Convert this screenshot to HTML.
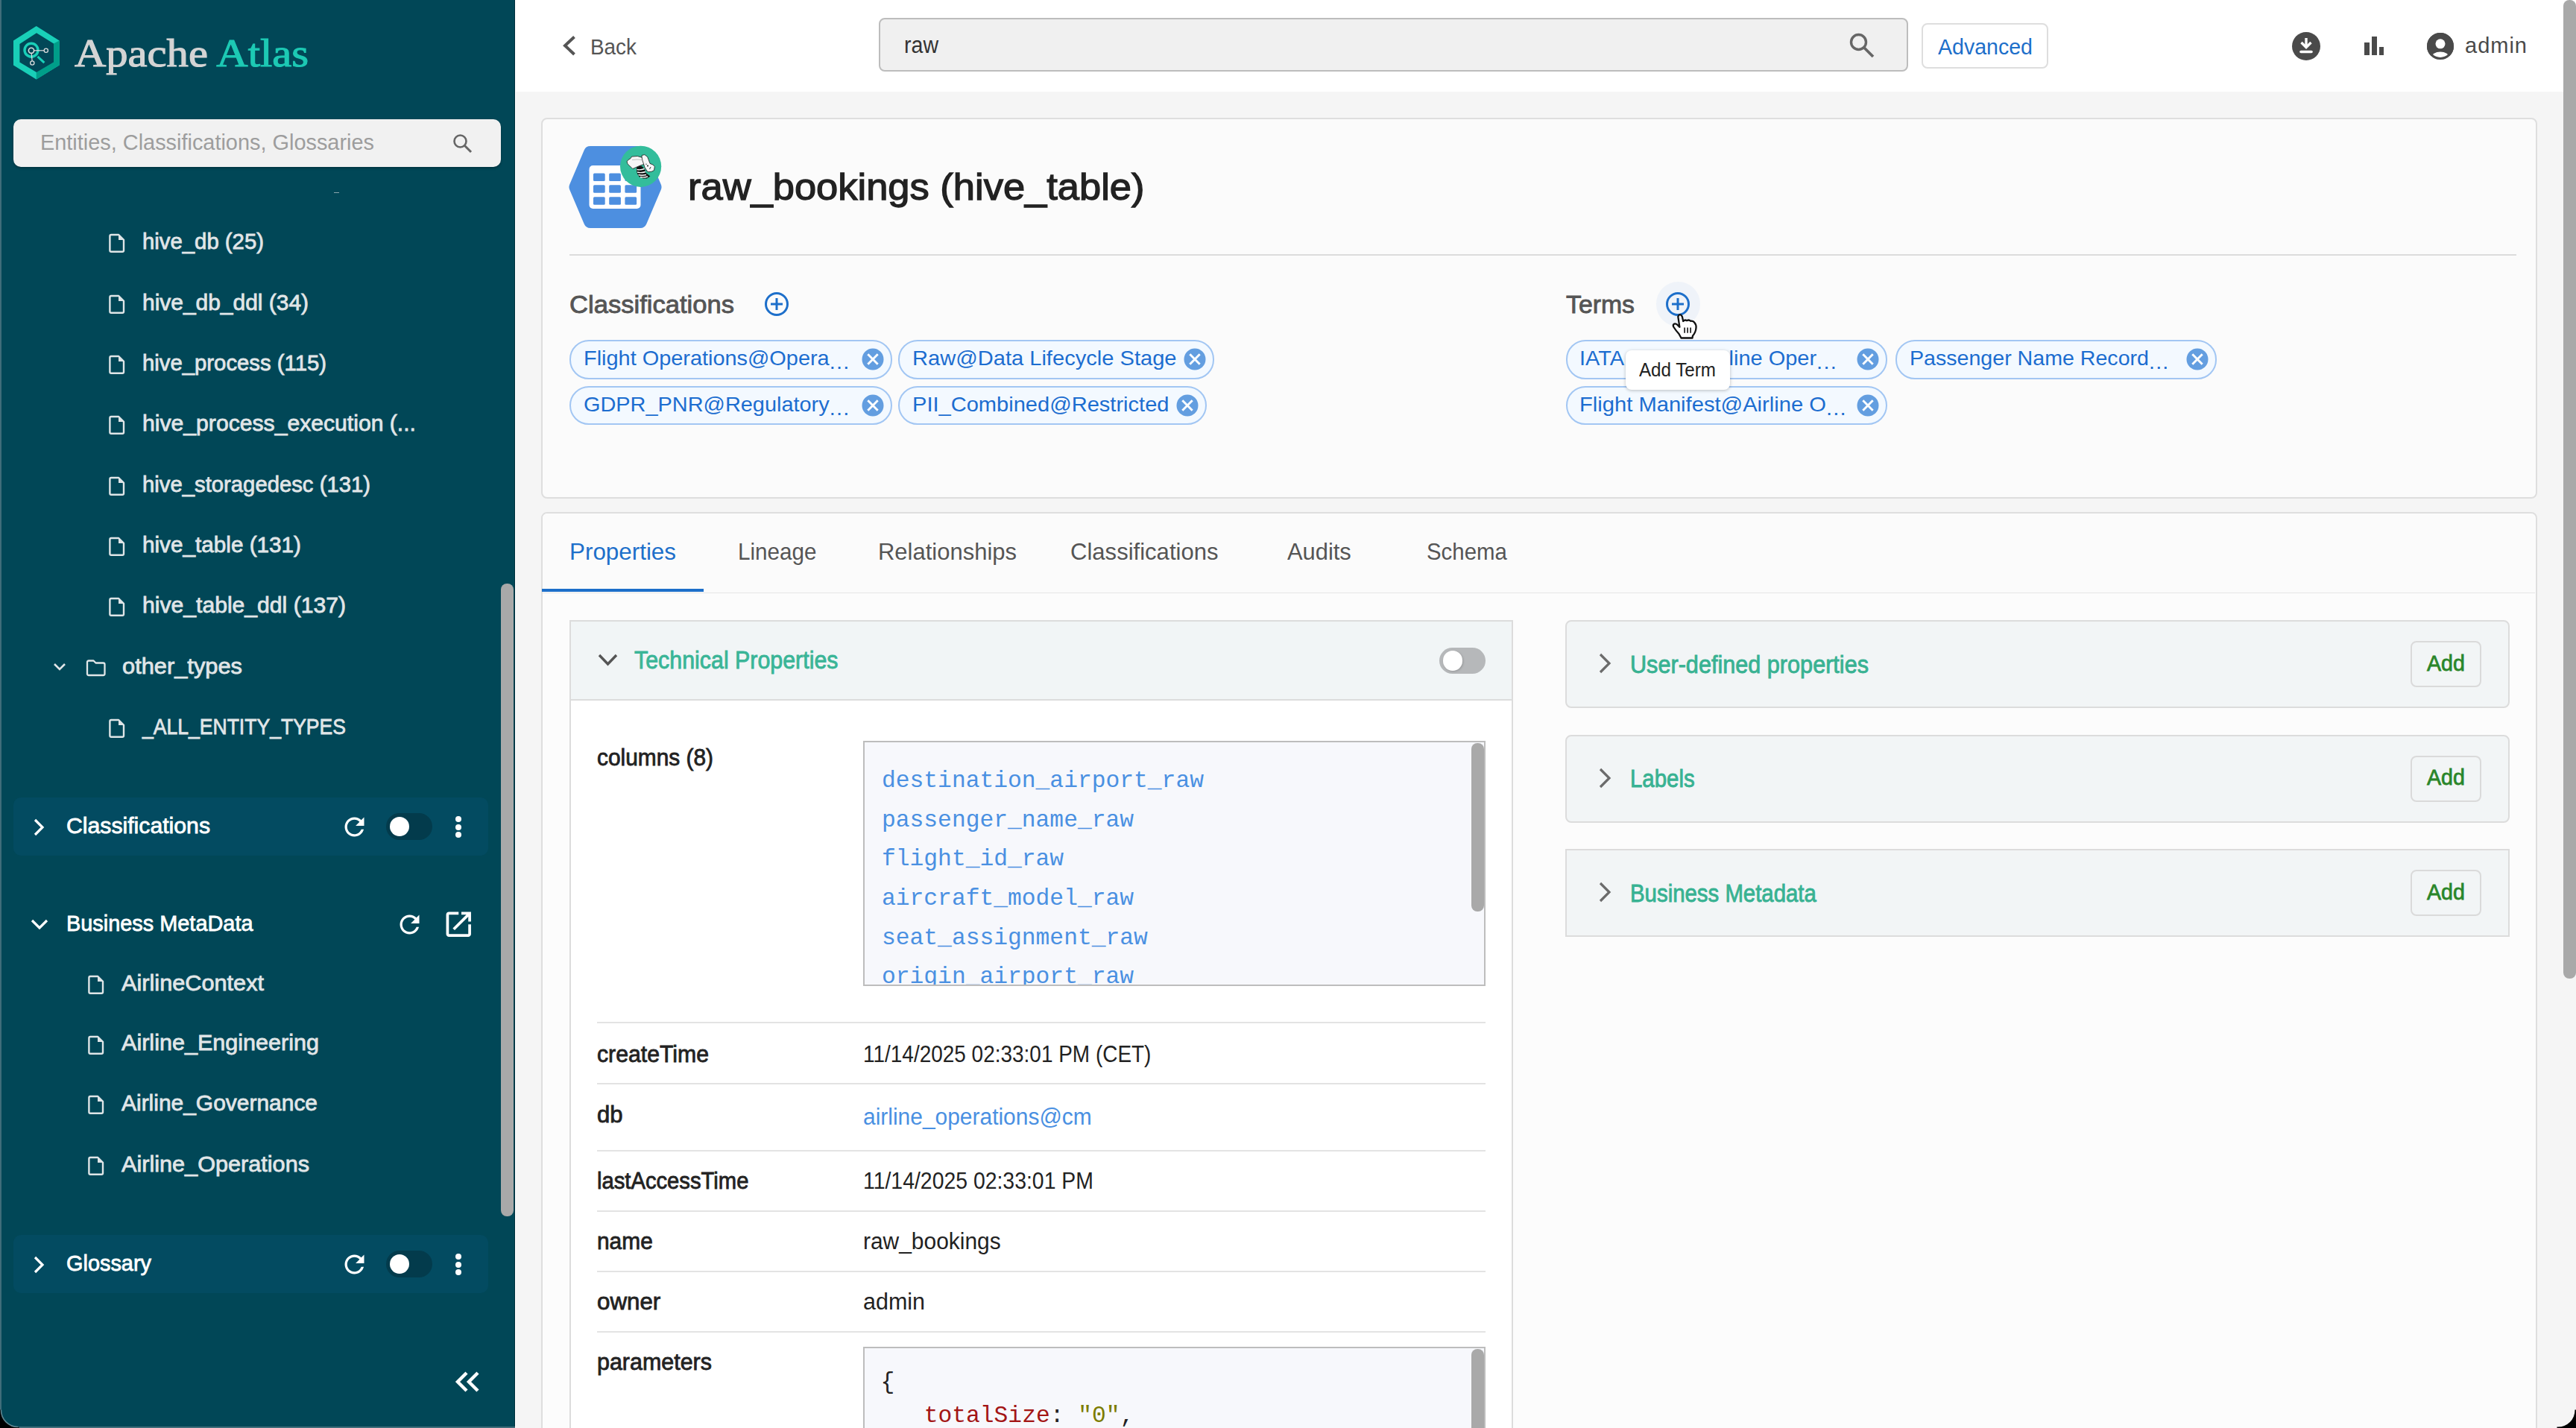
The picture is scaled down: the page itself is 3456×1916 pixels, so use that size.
<!DOCTYPE html>
<html><head><meta charset="utf-8"><style>
html,body{margin:0;padding:0;}
body{width:3456px;height:1916px;overflow:hidden;position:relative;background:#f4f4f4;font-family:"Liberation Sans",sans-serif;}
.b{position:absolute;}
.t{position:absolute;white-space:nowrap;line-height:normal;transform-origin:0 0;}
svg.b{overflow:visible;}
</style></head><body>
<div class="b" style="left:0.0px;top:0.0px;width:691.0px;height:1916.0px;background:#014757;"></div>
<div class="b" style="left:0.0px;top:0.0px;width:2.0px;height:1916.0px;background:#3f6d7a;"></div>
<div class="b" style="left:690.0px;top:0.0px;width:1.0px;height:1916.0px;background:#00313d;"></div>
<div class="b" style="left:691.0px;top:0.0px;width:1.0px;height:1916.0px;background:#ffffff;"></div>
<div class="b" style="left:0.0px;top:1914.0px;width:691.0px;height:2.0px;background:#3f6d7a;"></div>
<svg class="b" style="left:10.0px;top:30.0px" width="80" height="85" viewBox="0 0 80 85">
<polygon points="38.7,5 69.6,24.4 69.6,57.4 38.7,76.5 8,57.4 8,24.4" fill="#19cfb8"/>
<polygon points="69.6,24.4 69.6,57.4 38.7,76.5 38.7,67 62,53.6 62,28.6" fill="#009e89"/>
<polygon points="39,14.3 62,28.6 62,53.6 39,67 16.4,53.6 16.4,29" fill="#014757"/>
<circle cx="32" cy="37.2" r="9" fill="none" stroke="#19cfb8" stroke-width="3.4"/>
<line x1="40.5" y1="45.8" x2="49.4" y2="54.2" stroke="#19cfb8" stroke-width="3"/>
<line x1="32" y1="37.8" x2="51.8" y2="37.8" stroke="#ddd" stroke-width="1.2"/>
<line x1="32" y1="37.8" x2="33.3" y2="54.5" stroke="#ddd" stroke-width="1.2"/>
<circle cx="32" cy="37.8" r="3.6" fill="#014757" stroke="#ddd" stroke-width="1.6"/>
<circle cx="51.8" cy="37.8" r="2.6" fill="#014757" stroke="#ddd" stroke-width="1.3"/>
<circle cx="33.3" cy="54.5" r="2.6" fill="#014757" stroke="#ddd" stroke-width="1.3"/>
</svg>
<div class="t" id="t1" style="left:100.0px;top:42.0px;font-size:52.0px;color:#d4d4d4;font-weight:400;font-family:'Liberation Serif', serif;transform:scaleX(1.1266);-webkit-text-stroke:1.1px #d4d4d4;">Apache <span style="color:#1dc9b4;-webkit-text-stroke:1.1px #1dc9b4">Atlas</span></div>
<div class="b" style="left:18.0px;top:160.0px;width:654.0px;height:64.0px;background:#f1f1f1;border-radius:10px;box-shadow:0 2px 3px rgba(0,0,0,.25);"></div>
<div class="t" id="t2" style="left:54.0px;top:174.3px;font-size:29.5px;color:#9d9d9d;font-weight:400;font-family:'Liberation Sans', sans-serif;transform:scaleX(0.9794);">Entities, Classifications, Glossaries</div>
<svg class="b" style="left:606.0px;top:178.0px" width="30" height="30" viewBox="0 0 30 30"><circle cx="11.5" cy="11.5" r="8" fill="none" stroke="#666" stroke-width="2.6"/><line x1="17.5" y1="17.5" x2="26" y2="26" stroke="#666" stroke-width="3"/></svg>
<div class="b" style="left:448.0px;top:258.0px;width:7.0px;height:1.2px;background:#8aa6ad;"></div>
<svg class="b" style="left:146.0px;top:313.0px" width="22" height="26" viewBox="0 0 22 26"><path d="M3.2,2 H13.2 L20,8.8 V23 Q20,24.8 18.2,24.8 H3.2 Q1.4,24.8 1.4,23 V3.8 Q1.4,2 3.2,2 Z" fill="none" stroke="#dfe5e7" stroke-width="2.4" stroke-linejoin="round"/><polygon points="13,1.8 20.2,9 13,9" fill="#dfe5e7"/></svg>
<div class="t" id="t3" style="left:191.0px;top:306.9px;font-size:30.0px;color:#e1e6e8;font-weight:400;font-family:'Liberation Sans', sans-serif;transform:scaleX(0.9773);-webkit-text-stroke:0.78px #e1e6e8;">hive_db (25)</div>
<svg class="b" style="left:146.0px;top:395.0px" width="22" height="26" viewBox="0 0 22 26"><path d="M3.2,2 H13.2 L20,8.8 V23 Q20,24.8 18.2,24.8 H3.2 Q1.4,24.8 1.4,23 V3.8 Q1.4,2 3.2,2 Z" fill="none" stroke="#dfe5e7" stroke-width="2.4" stroke-linejoin="round"/><polygon points="13,1.8 20.2,9 13,9" fill="#dfe5e7"/></svg>
<div class="t" id="t4" style="left:191.0px;top:388.9px;font-size:30.0px;color:#e1e6e8;font-weight:400;font-family:'Liberation Sans', sans-serif;transform:scaleX(0.9978);-webkit-text-stroke:0.78px #e1e6e8;">hive_db_ddl (34)</div>
<svg class="b" style="left:146.0px;top:476.0px" width="22" height="26" viewBox="0 0 22 26"><path d="M3.2,2 H13.2 L20,8.8 V23 Q20,24.8 18.2,24.8 H3.2 Q1.4,24.8 1.4,23 V3.8 Q1.4,2 3.2,2 Z" fill="none" stroke="#dfe5e7" stroke-width="2.4" stroke-linejoin="round"/><polygon points="13,1.8 20.2,9 13,9" fill="#dfe5e7"/></svg>
<div class="t" id="t5" style="left:191.0px;top:469.9px;font-size:30.0px;color:#e1e6e8;font-weight:400;font-family:'Liberation Sans', sans-serif;transform:scaleX(0.9766);-webkit-text-stroke:0.78px #e1e6e8;">hive_process (115)</div>
<svg class="b" style="left:146.0px;top:557.0px" width="22" height="26" viewBox="0 0 22 26"><path d="M3.2,2 H13.2 L20,8.8 V23 Q20,24.8 18.2,24.8 H3.2 Q1.4,24.8 1.4,23 V3.8 Q1.4,2 3.2,2 Z" fill="none" stroke="#dfe5e7" stroke-width="2.4" stroke-linejoin="round"/><polygon points="13,1.8 20.2,9 13,9" fill="#dfe5e7"/></svg>
<div class="t" id="t6" style="left:191.0px;top:550.9px;font-size:30.0px;color:#e1e6e8;font-weight:400;font-family:'Liberation Sans', sans-serif;transform:scaleX(1.0049);-webkit-text-stroke:0.78px #e1e6e8;">hive_process_execution (...</div>
<svg class="b" style="left:146.0px;top:639.0px" width="22" height="26" viewBox="0 0 22 26"><path d="M3.2,2 H13.2 L20,8.8 V23 Q20,24.8 18.2,24.8 H3.2 Q1.4,24.8 1.4,23 V3.8 Q1.4,2 3.2,2 Z" fill="none" stroke="#dfe5e7" stroke-width="2.4" stroke-linejoin="round"/><polygon points="13,1.8 20.2,9 13,9" fill="#dfe5e7"/></svg>
<div class="t" id="t7" style="left:191.0px;top:632.9px;font-size:30.0px;color:#e1e6e8;font-weight:400;font-family:'Liberation Sans', sans-serif;transform:scaleX(0.9760);-webkit-text-stroke:0.78px #e1e6e8;">hive_storagedesc (131)</div>
<svg class="b" style="left:146.0px;top:720.0px" width="22" height="26" viewBox="0 0 22 26"><path d="M3.2,2 H13.2 L20,8.8 V23 Q20,24.8 18.2,24.8 H3.2 Q1.4,24.8 1.4,23 V3.8 Q1.4,2 3.2,2 Z" fill="none" stroke="#dfe5e7" stroke-width="2.4" stroke-linejoin="round"/><polygon points="13,1.8 20.2,9 13,9" fill="#dfe5e7"/></svg>
<div class="t" id="t8" style="left:191.0px;top:713.9px;font-size:30.0px;color:#e1e6e8;font-weight:400;font-family:'Liberation Sans', sans-serif;transform:scaleX(0.9900);-webkit-text-stroke:0.78px #e1e6e8;">hive_table (131)</div>
<svg class="b" style="left:146.0px;top:801.0px" width="22" height="26" viewBox="0 0 22 26"><path d="M3.2,2 H13.2 L20,8.8 V23 Q20,24.8 18.2,24.8 H3.2 Q1.4,24.8 1.4,23 V3.8 Q1.4,2 3.2,2 Z" fill="none" stroke="#dfe5e7" stroke-width="2.4" stroke-linejoin="round"/><polygon points="13,1.8 20.2,9 13,9" fill="#dfe5e7"/></svg>
<div class="t" id="t9" style="left:191.0px;top:794.9px;font-size:30.0px;color:#e1e6e8;font-weight:400;font-family:'Liberation Sans', sans-serif;transform:scaleX(1.0041);-webkit-text-stroke:0.78px #e1e6e8;">hive_table_ddl (137)</div>
<svg class="b" style="left:70.0px;top:887.0px" width="20" height="16" viewBox="0 0 20 16"><polyline points="3,4 10,11 17,4" fill="none" stroke="#e1e6e8" stroke-width="2.6"/></svg>
<svg class="b" style="left:115.0px;top:884.0px" width="28" height="24" viewBox="0 0 28 24"><path d="M4 2.5 H10.5 L13.5 5.5 H23.5 Q25.5 5.5 25.5 7.5 V20 Q25.5 22 23.5 22 H4 Q2 22 2 20 V4.5 Q2 2.5 4 2.5 Z" fill="none" stroke="#e1e6e8" stroke-width="2.3" stroke-linejoin="round"/></svg>
<div class="t" id="t10" style="left:163.5px;top:876.9px;font-size:30.0px;color:#e1e6e8;font-weight:400;font-family:'Liberation Sans', sans-serif;transform:scaleX(1.0269);-webkit-text-stroke:0.78px #e1e6e8;">other_types</div>
<svg class="b" style="left:146.0px;top:964.0px" width="22" height="26" viewBox="0 0 22 26"><path d="M3.2,2 H13.2 L20,8.8 V23 Q20,24.8 18.2,24.8 H3.2 Q1.4,24.8 1.4,23 V3.8 Q1.4,2 3.2,2 Z" fill="none" stroke="#dfe5e7" stroke-width="2.4" stroke-linejoin="round"/><polygon points="13,1.8 20.2,9 13,9" fill="#dfe5e7"/></svg>
<div class="t" id="t11" style="left:191.0px;top:957.9px;font-size:30.0px;color:#e1e6e8;font-weight:400;font-family:'Liberation Sans', sans-serif;transform:scaleX(0.8850);-webkit-text-stroke:0.78px #e1e6e8;">_ALL_ENTITY_TYPES</div>
<div class="b" style="left:672.0px;top:783.0px;width:17.0px;height:849.0px;background:#a9a9a9;border-radius:8px;"></div>
<div class="b" style="left:18.0px;top:1070.0px;width:637.0px;height:78.0px;background:#034b61;border-radius:10px;"></div>
<svg class="b" style="left:40.0px;top:1097.0px" width="26" height="26" viewBox="0 0 26 26"><polyline points="7,3 17,13 7,23" fill="none" stroke="#fff" stroke-width="3.2"/></svg>
<div class="t" id="t12" style="left:89.0px;top:1090.8px;font-size:30.0px;color:#ffffff;font-weight:400;font-family:'Liberation Sans', sans-serif;transform:scaleX(1.0066);-webkit-text-stroke:0.78px #ffffff;">Classifications</div>
<svg class="b" style="left:455.90px;top:1089.70px" width="39.00" height="39.00" viewBox="0 0 24 24"><path d="M17.65 6.35C16.2 4.9 14.21 4 12 4c-4.42 0-7.99 3.58-7.99 8s3.57 8 7.99 8c3.73 0 6.84-2.55 7.73-6h-2.08c-.82 2.33-3.04 4-5.65 4-3.31 0-6-2.69-6-6s2.69-6 6-6c1.66 0 3.14.69 4.22 1.78L13 11h7V4l-2.35 2.35z" fill="#fff"/></svg>
<div class="b" style="left:518.0px;top:1091.0px;width:62.0px;height:36.0px;background:#033b4c;border-radius:18px;"></div>
<div class="b" style="left:522.5px;top:1096.0px;width:26.0px;height:26.0px;background:#fff;border-radius:13px;"></div>
<div class="b" style="left:611.0px;top:1095.0px;width:8.0px;height:8.0px;background:#fff;border-radius:4px;"></div>
<div class="b" style="left:611.0px;top:1105.5px;width:8.0px;height:8.0px;background:#fff;border-radius:4px;"></div>
<div class="b" style="left:611.0px;top:1116.0px;width:8.0px;height:8.0px;background:#fff;border-radius:4px;"></div>
<svg class="b" style="left:40.0px;top:1230.0px" width="26" height="20" viewBox="0 0 26 20"><polyline points="3,5 13,15 23,5" fill="none" stroke="#fff" stroke-width="3.2"/></svg>
<div class="t" id="t13" style="left:89.0px;top:1221.8px;font-size:30.0px;color:#ffffff;font-weight:400;font-family:'Liberation Sans', sans-serif;transform:scaleX(0.9629);-webkit-text-stroke:0.78px #ffffff;">Business MetaData</div>
<svg class="b" style="left:529.70px;top:1220.70px" width="39.00" height="39.00" viewBox="0 0 24 24"><path d="M17.65 6.35C16.2 4.9 14.21 4 12 4c-4.42 0-7.99 3.58-7.99 8s3.57 8 7.99 8c3.73 0 6.84-2.55 7.73-6h-2.08c-.82 2.33-3.04 4-5.65 4-3.31 0-6-2.69-6-6s2.69-6 6-6c1.66 0 3.14.69 4.22 1.78L13 11h7V4l-2.35 2.35z" fill="#fff"/></svg>
<svg class="b" style="left:592.63px;top:1217.53px" width="44.53" height="44.53" viewBox="0 0 24 24"><path d="M19 19H5V5h7V3H5c-1.11 0-2 .9-2 2v14c0 1.1.89 2 2 2h14c1.1 0 2-.9 2-2v-7h-2v7zM14 3v2h3.59l-9.83 9.83 1.41 1.41L19 6.41V10h2V3h-7z" fill="#fff"/></svg>
<svg class="b" style="left:118.0px;top:1308.0px" width="22" height="26" viewBox="0 0 22 26"><path d="M3.2,2 H13.2 L20,8.8 V23 Q20,24.8 18.2,24.8 H3.2 Q1.4,24.8 1.4,23 V3.8 Q1.4,2 3.2,2 Z" fill="none" stroke="#dfe5e7" stroke-width="2.4" stroke-linejoin="round"/><polygon points="13,1.8 20.2,9 13,9" fill="#dfe5e7"/></svg>
<div class="t" id="t14" style="left:163.0px;top:1301.8px;font-size:30.0px;color:#e1e6e8;font-weight:400;font-family:'Liberation Sans', sans-serif;transform:scaleX(1.0227);-webkit-text-stroke:0.78px #e1e6e8;">AirlineContext</div>
<svg class="b" style="left:118.0px;top:1388.5px" width="22" height="26" viewBox="0 0 22 26"><path d="M3.2,2 H13.2 L20,8.8 V23 Q20,24.8 18.2,24.8 H3.2 Q1.4,24.8 1.4,23 V3.8 Q1.4,2 3.2,2 Z" fill="none" stroke="#dfe5e7" stroke-width="2.4" stroke-linejoin="round"/><polygon points="13,1.8 20.2,9 13,9" fill="#dfe5e7"/></svg>
<div class="t" id="t15" style="left:163.0px;top:1382.3px;font-size:30.0px;color:#e1e6e8;font-weight:400;font-family:'Liberation Sans', sans-serif;transform:scaleX(1.0186);-webkit-text-stroke:0.78px #e1e6e8;">Airline_Engineering</div>
<svg class="b" style="left:118.0px;top:1469.0px" width="22" height="26" viewBox="0 0 22 26"><path d="M3.2,2 H13.2 L20,8.8 V23 Q20,24.8 18.2,24.8 H3.2 Q1.4,24.8 1.4,23 V3.8 Q1.4,2 3.2,2 Z" fill="none" stroke="#dfe5e7" stroke-width="2.4" stroke-linejoin="round"/><polygon points="13,1.8 20.2,9 13,9" fill="#dfe5e7"/></svg>
<div class="t" id="t16" style="left:163.0px;top:1462.8px;font-size:30.0px;color:#e1e6e8;font-weight:400;font-family:'Liberation Sans', sans-serif;transform:scaleX(0.9982);-webkit-text-stroke:0.78px #e1e6e8;">Airline_Governance</div>
<svg class="b" style="left:118.0px;top:1551.0px" width="22" height="26" viewBox="0 0 22 26"><path d="M3.2,2 H13.2 L20,8.8 V23 Q20,24.8 18.2,24.8 H3.2 Q1.4,24.8 1.4,23 V3.8 Q1.4,2 3.2,2 Z" fill="none" stroke="#dfe5e7" stroke-width="2.4" stroke-linejoin="round"/><polygon points="13,1.8 20.2,9 13,9" fill="#dfe5e7"/></svg>
<div class="t" id="t17" style="left:163.0px;top:1544.8px;font-size:30.0px;color:#e1e6e8;font-weight:400;font-family:'Liberation Sans', sans-serif;transform:scaleX(1.0211);-webkit-text-stroke:0.78px #e1e6e8;">Airline_Operations</div>
<div class="b" style="left:18.0px;top:1657.0px;width:637.0px;height:78.0px;background:#034b61;border-radius:10px;"></div>
<svg class="b" style="left:40.0px;top:1684.0px" width="26" height="26" viewBox="0 0 26 26"><polyline points="7,3 17,13 7,23" fill="none" stroke="#fff" stroke-width="3.2"/></svg>
<div class="t" id="t18" style="left:89.0px;top:1677.8px;font-size:30.0px;color:#ffffff;font-weight:400;font-family:'Liberation Sans', sans-serif;transform:scaleX(0.9632);-webkit-text-stroke:0.78px #ffffff;">Glossary</div>
<svg class="b" style="left:455.90px;top:1676.70px" width="39.00" height="39.00" viewBox="0 0 24 24"><path d="M17.65 6.35C16.2 4.9 14.21 4 12 4c-4.42 0-7.99 3.58-7.99 8s3.57 8 7.99 8c3.73 0 6.84-2.55 7.73-6h-2.08c-.82 2.33-3.04 4-5.65 4-3.31 0-6-2.69-6-6s2.69-6 6-6c1.66 0 3.14.69 4.22 1.78L13 11h7V4l-2.35 2.35z" fill="#fff"/></svg>
<div class="b" style="left:518.0px;top:1678.0px;width:62.0px;height:36.0px;background:#033b4c;border-radius:18px;"></div>
<div class="b" style="left:522.5px;top:1683.0px;width:26.0px;height:26.0px;background:#fff;border-radius:13px;"></div>
<div class="b" style="left:611.0px;top:1682.0px;width:8.0px;height:8.0px;background:#fff;border-radius:4px;"></div>
<div class="b" style="left:611.0px;top:1692.5px;width:8.0px;height:8.0px;background:#fff;border-radius:4px;"></div>
<div class="b" style="left:611.0px;top:1703.0px;width:8.0px;height:8.0px;background:#fff;border-radius:4px;"></div>
<svg class="b" style="left:608.0px;top:1838.0px" width="40" height="34" viewBox="0 0 40 34"><polyline points="18,4 6,16 18,28" fill="none" stroke="#fff" stroke-width="4.4"/><polyline points="33,4 21,16 33,28" fill="none" stroke="#fff" stroke-width="4.4"/></svg>
<div class="b" style="left:692.0px;top:0.0px;width:2764.0px;height:1916.0px;background:#f5f5f5;"></div>
<div class="b" style="left:692.0px;top:0.0px;width:2764.0px;height:123.0px;background:#fff;"></div>
<svg class="b" style="left:752.0px;top:46.0px" width="26" height="32" viewBox="0 0 26 32"><polyline points="18.5,3.5 6,15.2 18.5,27" fill="none" stroke="#555" stroke-width="4"/></svg>
<div class="t" id="t19" style="left:792.0px;top:45.5px;font-size:29.5px;color:#555;font-weight:400;font-family:'Liberation Sans', sans-serif;transform:scaleX(0.9452);">Back</div>
<div class="b" style="left:1178.5px;top:24.0px;width:1381.0px;height:72.0px;background:#f0f0f0;border:2px solid #bdbdbd;border-radius:8px;box-sizing:border-box;"></div>
<div class="t" id="t20" style="left:1213.0px;top:42.9px;font-size:31.0px;color:#333;font-weight:400;font-family:'Liberation Sans', sans-serif;transform:scaleX(0.9209);">raw</div>
<svg class="b" style="left:2479.0px;top:41.5px" width="38" height="38" viewBox="0 0 38 38"><circle cx="14.5" cy="14.5" r="10" fill="none" stroke="#666" stroke-width="3.4"/><line x1="22" y1="22" x2="34" y2="34" stroke="#666" stroke-width="3.8"/></svg>
<div class="b" style="left:2578.0px;top:31.0px;width:170.0px;height:61.0px;background:#fff;border:2px solid #dedede;border-radius:8px;box-sizing:border-box;"></div>
<div class="t" id="t21" style="left:2599.5px;top:46.3px;font-size:30.0px;color:#1d6fca;font-weight:400;font-family:'Liberation Sans', sans-serif;transform:scaleX(0.9518);">Advanced</div>
<svg class="b" style="left:3075.0px;top:43.0px" width="38" height="38" viewBox="0 0 38 38"><circle cx="19" cy="19" r="19" fill="#4a4a4a"/><line x1="19" y1="8" x2="19" y2="20" stroke="#fff" stroke-width="3.4"/><polyline points="12.5,14 19,20.5 25.5,14" fill="none" stroke="#fff" stroke-width="3.4"/><line x1="12" y1="26.5" x2="26" y2="26.5" stroke="#fff" stroke-width="3.6" stroke-linecap="round"/></svg>
<div class="b" style="left:3172.0px;top:56.7px;width:6.5px;height:17.3px;background:#4a4a4a;"></div>
<div class="b" style="left:3182.0px;top:48.6px;width:6.5px;height:25.4px;background:#4a4a4a;"></div>
<div class="b" style="left:3192.0px;top:63.0px;width:6.0px;height:11.0px;background:#4a4a4a;"></div>
<svg class="b" style="left:3256.0px;top:44.0px" width="36" height="36" viewBox="0 0 36 36"><defs><clipPath id="uc"><circle cx="18" cy="18" r="18"/></clipPath></defs><circle cx="18" cy="18" r="18" fill="#4a4a4a"/><circle cx="18" cy="14.8" r="6.5" fill="#fff"/><ellipse cx="18" cy="33" rx="12" ry="7.5" fill="#fff" clip-path="url(#uc)"/><circle cx="18" cy="18" r="16.5" fill="none" stroke="#4a4a4a" stroke-width="3"/></svg>
<div class="t" id="t22" style="left:3306.5px;top:44.3px;font-size:29.5px;color:#4a4a4a;font-weight:400;font-family:'Liberation Sans', sans-serif;transform:scaleX(0.9841);letter-spacing:1px;">admin</div>
<div class="b" style="left:726.0px;top:158.0px;width:2678.0px;height:511.0px;background:#fbfbfb;border:2px solid #dedede;border-radius:8px;box-sizing:border-box;"></div>
<svg class="b" style="left:755.0px;top:190.0px" width="140" height="125" viewBox="0 0 140 125">
<polygon points="37,15 104,15 123.5,61 104,107 37,107 17.5,61" fill="#4d8fe0" stroke="#4d8fe0" stroke-width="18" stroke-linejoin="round"/>
<rect x="35.5" y="32" width="69" height="58" rx="5" fill="#fff"/>
<g fill="#4d8fe0">
<rect x="41" y="42.5" width="15.7" height="10.5" rx="1.5"/><rect x="62.2" y="42.5" width="15.7" height="10.5" rx="1.5"/><rect x="83.4" y="42.5" width="15.7" height="10.5" rx="1.5"/>
<rect x="41" y="58.2" width="15.7" height="10.5" rx="1.5"/><rect x="62.2" y="58.2" width="15.7" height="10.5" rx="1.5"/><rect x="83.4" y="58.2" width="15.7" height="10.5" rx="1.5"/>
<rect x="41" y="74.3" width="15.7" height="10.5" rx="1.5"/><rect x="62.2" y="74.3" width="15.7" height="10.5" rx="1.5"/><rect x="83.4" y="74.3" width="15.7" height="10.5" rx="1.5"/>
</g>
<circle cx="104.6" cy="33.3" r="27.6" fill="#33bd9b"/>
<path d="M99,34.4 L103.6,31.9 L106.9,33.6 L110.3,37.8 L111.6,42 L117.4,46.6 L112.8,49.5 L107.8,49.5 L102.3,47 L99.8,42.8 L99,38.6 Z" fill="#111"/>
<path d="M99.5,37.5 Q104,38.5 109.5,36.5 M100,41 Q105,42.5 111,40.5 M101.5,44.5 Q106,46 112,44.5 M104,47.5 Q108,48.5 114,47" fill="none" stroke="#fff" stroke-width="1.4"/>
<path d="M86.1,26.8 L87.6,24.7 L91,22.6 L92.6,20.1 L100.2,19.5 L106.9,21.4 L110.7,25.2 L112,26.8 L109.5,30.2 L104.4,31.9 L98.5,34.4 L93.9,36.5 L91.8,34.4 L88.9,31.9 L86.8,29.4 Z" fill="#f6f6f6" stroke="#1a1a1a" stroke-width=".8" stroke-linejoin="round"/>
<path d="M106.1,18.4 L109.9,17.6 L113.7,20.5 L115.3,24.7 L117,29.4 L121.2,31.1 L123.3,33.6 L122.5,38.6 L119.1,40.3 L114.1,40.7 L112,37.8 L109.9,34.4 L108.6,30.2 L106.9,25.2 L106.1,21 Z" fill="#f6f6f6" stroke="#1a1a1a" stroke-width=".8" stroke-linejoin="round"/>
<path d="M93,24.5 Q100,23.5 107,24.5" fill="none" stroke="#999" stroke-width=".6"/>
<circle cx="114" cy="32.5" r="1" fill="#222"/><circle cx="112" cy="30.3" r=".7" fill="#333"/><path d="M118,34 L116.5,37" stroke="#222" stroke-width=".9"/>
</svg>
<div class="t" id="t23" style="left:922.5px;top:221.6px;font-size:50.0px;color:#222;font-weight:400;font-family:'Liberation Sans', sans-serif;transform:scaleX(1.0494);-webkit-text-stroke:1.30px #222;">raw_bookings (hive_table)</div>
<div class="b" style="left:763.5px;top:341.0px;width:2612.0px;height:2.0px;background:#dcdcdc;"></div>
<div class="t" id="t24" style="left:764.0px;top:389.2px;font-size:34.0px;color:#555;font-weight:400;font-family:'Liberation Sans', sans-serif;transform:scaleX(1.0170);-webkit-text-stroke:0.88px #555;">Classifications</div>
<svg class="b" style="left:1024.0px;top:390.0px" width="36" height="36" viewBox="0 0 36 36"><circle cx="18" cy="18" r="14.5" fill="none" stroke="#1d6fca" stroke-width="3"/><line x1="18" y1="10" x2="18" y2="26" stroke="#1d6fca" stroke-width="3"/><line x1="10" y1="18" x2="26" y2="18" stroke="#1d6fca" stroke-width="3"/></svg>
<div class="t" id="t25" style="left:2101.0px;top:389.2px;font-size:34.0px;color:#555;font-weight:400;font-family:'Liberation Sans', sans-serif;transform:scaleX(0.9939);-webkit-text-stroke:0.88px #555;">Terms</div>
<div class="b" style="left:2221.5px;top:378.0px;width:59.5px;height:59.5px;background:#eff3f9;border-radius:30px;"></div>
<svg class="b" style="left:2233.0px;top:390.0px" width="36" height="36" viewBox="0 0 36 36"><circle cx="18" cy="18" r="14.5" fill="none" stroke="#1d6fca" stroke-width="3"/><line x1="18" y1="10" x2="18" y2="26" stroke="#1d6fca" stroke-width="3"/><line x1="10" y1="18" x2="26" y2="18" stroke="#1d6fca" stroke-width="3"/></svg>
<div class="b" style="left:764.0px;top:456.0px;width:432.5px;height:53.0px;background:#f3f9ff;border:2px solid #a2c6f3;border-radius:26px;box-sizing:border-box;"></div>
<div class="t" id="t26" style="left:782.5px;top:465.2px;font-size:28.0px;color:#1c6dd0;font-weight:400;font-family:'Liberation Sans', sans-serif;transform:scaleX(1.0320);">Flight Operations@Opera<span style="letter-spacing:1.2px;position:relative;top:5px">...</span></div>
<svg class="b" style="left:1155.5px;top:467.0px" width="30" height="30" viewBox="0 0 30 30"><circle cx="15" cy="15" r="14.5" fill="#639ee0"/><path d="M8.3 8.3 L21.7 21.7 M21.7 8.3 L8.3 21.7" stroke="#fff" stroke-width="2.9"/></svg>
<div class="b" style="left:1205.0px;top:456.0px;width:424.0px;height:53.0px;background:#f3f9ff;border:2px solid #a2c6f3;border-radius:26px;box-sizing:border-box;"></div>
<div class="t" id="t27" style="left:1223.5px;top:465.2px;font-size:28.0px;color:#1c6dd0;font-weight:400;font-family:'Liberation Sans', sans-serif;transform:scaleX(1.0388);">Raw@Data Lifecycle Stage</div>
<svg class="b" style="left:1588.0px;top:467.0px" width="30" height="30" viewBox="0 0 30 30"><circle cx="15" cy="15" r="14.5" fill="#639ee0"/><path d="M8.3 8.3 L21.7 21.7 M21.7 8.3 L8.3 21.7" stroke="#fff" stroke-width="2.9"/></svg>
<div class="b" style="left:764.0px;top:518.0px;width:432.5px;height:52.0px;background:#f3f9ff;border:2px solid #a2c6f3;border-radius:26px;box-sizing:border-box;"></div>
<div class="t" id="t28" style="left:782.5px;top:527.2px;font-size:28.0px;color:#1c6dd0;font-weight:400;font-family:'Liberation Sans', sans-serif;transform:scaleX(1.0321);">GDPR_PNR@Regulatory<span style="letter-spacing:1.2px;position:relative;top:5px">...</span></div>
<svg class="b" style="left:1155.5px;top:529.0px" width="30" height="30" viewBox="0 0 30 30"><circle cx="15" cy="15" r="14.5" fill="#639ee0"/><path d="M8.3 8.3 L21.7 21.7 M21.7 8.3 L8.3 21.7" stroke="#fff" stroke-width="2.9"/></svg>
<div class="b" style="left:1205.0px;top:518.0px;width:414.0px;height:52.0px;background:#f3f9ff;border:2px solid #a2c6f3;border-radius:26px;box-sizing:border-box;"></div>
<div class="t" id="t29" style="left:1223.5px;top:527.2px;font-size:28.0px;color:#1c6dd0;font-weight:400;font-family:'Liberation Sans', sans-serif;transform:scaleX(1.0379);">PII_Combined@Restricted</div>
<svg class="b" style="left:1578.0px;top:529.0px" width="30" height="30" viewBox="0 0 30 30"><circle cx="15" cy="15" r="14.5" fill="#639ee0"/><path d="M8.3 8.3 L21.7 21.7 M21.7 8.3 L8.3 21.7" stroke="#fff" stroke-width="2.9"/></svg>
<div class="b" style="left:2100.5px;top:456.0px;width:431.5px;height:53.0px;background:#f3f9ff;border:2px solid #a2c6f3;border-radius:26px;box-sizing:border-box;"></div>
<div class="t" id="t30" style="left:2119.0px;top:465.2px;font-size:28.0px;color:#1c6dd0;font-weight:400;font-family:'Liberation Sans', sans-serif;transform:scaleX(1.0345);">IATA Code@Airline Oper<span style="letter-spacing:1.2px;position:relative;top:5px">...</span></div>
<svg class="b" style="left:2491.0px;top:467.0px" width="30" height="30" viewBox="0 0 30 30"><circle cx="15" cy="15" r="14.5" fill="#639ee0"/><path d="M8.3 8.3 L21.7 21.7 M21.7 8.3 L8.3 21.7" stroke="#fff" stroke-width="2.9"/></svg>
<div class="b" style="left:2543.0px;top:456.0px;width:431.0px;height:53.0px;background:#f3f9ff;border:2px solid #a2c6f3;border-radius:26px;box-sizing:border-box;"></div>
<div class="t" id="t31" style="left:2561.5px;top:465.2px;font-size:28.0px;color:#1c6dd0;font-weight:400;font-family:'Liberation Sans', sans-serif;transform:scaleX(1.0210);">Passenger Name Record<span style="letter-spacing:1.2px;position:relative;top:5px">...</span></div>
<svg class="b" style="left:2933.0px;top:467.0px" width="30" height="30" viewBox="0 0 30 30"><circle cx="15" cy="15" r="14.5" fill="#639ee0"/><path d="M8.3 8.3 L21.7 21.7 M21.7 8.3 L8.3 21.7" stroke="#fff" stroke-width="2.9"/></svg>
<div class="b" style="left:2100.5px;top:518.0px;width:431.5px;height:52.0px;background:#f3f9ff;border:2px solid #a2c6f3;border-radius:26px;box-sizing:border-box;"></div>
<div class="t" id="t32" style="left:2119.0px;top:527.2px;font-size:28.0px;color:#1c6dd0;font-weight:400;font-family:'Liberation Sans', sans-serif;transform:scaleX(1.0411);">Flight Manifest@Airline O<span style="letter-spacing:1.2px;position:relative;top:5px">...</span></div>
<svg class="b" style="left:2491.0px;top:529.0px" width="30" height="30" viewBox="0 0 30 30"><circle cx="15" cy="15" r="14.5" fill="#639ee0"/><path d="M8.3 8.3 L21.7 21.7 M21.7 8.3 L8.3 21.7" stroke="#fff" stroke-width="2.9"/></svg>
<div class="b" style="left:2180.5px;top:470.0px;width:140.0px;height:52.5px;background:#fff;border-radius:8px;box-shadow:0 1px 4px rgba(0,0,0,.25);"></div>
<div class="t" id="t33" style="left:2199.0px;top:481.0px;font-size:26.5px;color:#222;font-weight:400;font-family:'Liberation Sans', sans-serif;transform:scaleX(0.9120);">Add Term</div>
<svg class="b" style="left:2240.0px;top:418.0px" width="42" height="42" viewBox="0 0 42 42"><path d="M11.3,6.8 Q13.8,1.5 16.9,6.9 L18.2,13 Q20.5,10.5 23,12.2 Q26,10.5 28.2,12.8 Q31.5,12 33.5,15 Q36,18 35.5,22 Q35,28 31,32.5 L30.5,35.5 H15.5 L12.5,30 Q8,25 5.2,20.5 Q4,17.8 6.2,16.6 Q8.3,15.8 10.3,17.8 L13.4,20.8 Z" fill="#fff" stroke="#111" stroke-width="2.3" stroke-linejoin="round"/><path d="M20.1,21.5 V28.7 M24.1,21.5 V28.7 M28.1,21.5 V28.7" stroke="#111" stroke-width="1.6"/></svg>
<div class="b" style="left:726.0px;top:687.0px;width:2678.0px;height:1300.0px;background:#fcfcfc;border:2px solid #dedede;border-radius:8px;box-sizing:border-box;"></div>
<div class="b" style="left:728.0px;top:689.0px;width:2673.0px;height:105.0px;background:#fbfbfb;border-radius:6px 6px 0 0;"></div>
<div class="b" style="left:728.0px;top:794.5px;width:2673.0px;height:1.5px;background:#e6e6e6;"></div>
<div class="b" style="left:727.0px;top:790.0px;width:217.0px;height:4.3px;background:#1d6fca;"></div>
<div class="t" id="t34" style="left:764.0px;top:722.3px;font-size:32.0px;color:#1d6fca;font-weight:400;font-family:'Liberation Sans', sans-serif;transform:scaleX(0.9805);">Properties</div>
<div class="t" id="t35" style="left:989.6px;top:722.3px;font-size:32.0px;color:#555;font-weight:400;font-family:'Liberation Sans', sans-serif;transform:scaleX(0.9254);">Lineage</div>
<div class="t" id="t36" style="left:1178.0px;top:722.3px;font-size:32.0px;color:#555;font-weight:400;font-family:'Liberation Sans', sans-serif;transform:scaleX(0.9682);">Relationships</div>
<div class="t" id="t37" style="left:1436.0px;top:722.3px;font-size:32.0px;color:#555;font-weight:400;font-family:'Liberation Sans', sans-serif;transform:scaleX(0.9706);">Classifications</div>
<div class="t" id="t38" style="left:1726.8px;top:722.3px;font-size:32.0px;color:#555;font-weight:400;font-family:'Liberation Sans', sans-serif;transform:scaleX(0.9647);">Audits</div>
<div class="t" id="t39" style="left:1913.7px;top:722.3px;font-size:32.0px;color:#555;font-weight:400;font-family:'Liberation Sans', sans-serif;transform:scaleX(0.9183);">Schema</div>
<div class="b" style="left:764.0px;top:832.0px;width:1266.0px;height:1200.0px;background:#fff;border:2px solid #dcdcdc;box-sizing:border-box;"></div>
<div class="b" style="left:766.0px;top:834.0px;width:1262.0px;height:105.0px;background:#f1f5f6;"></div>
<div class="b" style="left:766.0px;top:938.0px;width:1262.0px;height:2.0px;background:#dcdcdc;"></div>
<svg class="b" style="left:800.0px;top:874.0px" width="32" height="24" viewBox="0 0 32 24"><polyline points="4,5 15.5,17 27,5" fill="none" stroke="#555" stroke-width="3.4"/></svg>
<div class="t" id="t40" style="left:850.5px;top:866.6px;font-size:33.0px;color:#3ab597;font-weight:400;font-family:'Liberation Sans', sans-serif;transform:scaleX(0.9204);-webkit-text-stroke:0.86px #3ab597;">Technical Properties</div>
<div class="b" style="left:1931.0px;top:869.0px;width:62.0px;height:35.0px;background:#b6b8ba;border-radius:17.5px;"></div>
<div class="b" style="left:1935.8px;top:873.2px;width:26.4px;height:26.4px;background:#fff;border-radius:13.2px;box-shadow:1px 1px 3px rgba(0,0,0,.18);"></div>
<div class="t" id="t41" style="left:801.0px;top:998.9px;font-size:31.0px;color:#222;font-weight:400;font-family:'Liberation Sans', sans-serif;transform:scaleX(0.9633);-webkit-text-stroke:0.81px #222;">columns (8)</div>
<div class="b" style="left:1158.0px;top:994.0px;width:835.0px;height:329.0px;background:#f7f8fc;border:2px solid #bdbdbd;box-sizing:border-box;overflow:hidden;"></div>
<div class="b" style="left:1160px;top:996px;width:831px;height:325px;overflow:hidden">
<div class="t" id="t42" style="left:23.0px;top:33.9px;font-size:31.3px;color:#4a90e2;font-weight:400;font-family:'Liberation Mono', monospace;">destination_airport_raw</div>
<div class="t" id="t43" style="left:23.0px;top:86.6px;font-size:31.3px;color:#4a90e2;font-weight:400;font-family:'Liberation Mono', monospace;">passenger_name_raw</div>
<div class="t" id="t44" style="left:23.0px;top:139.3px;font-size:31.3px;color:#4a90e2;font-weight:400;font-family:'Liberation Mono', monospace;">flight_id_raw</div>
<div class="t" id="t45" style="left:23.0px;top:192.0px;font-size:31.3px;color:#4a90e2;font-weight:400;font-family:'Liberation Mono', monospace;">aircraft_model_raw</div>
<div class="t" id="t46" style="left:23.0px;top:244.7px;font-size:31.3px;color:#4a90e2;font-weight:400;font-family:'Liberation Mono', monospace;">seat_assignment_raw</div>
<div class="t" id="t47" style="left:23.0px;top:297.4px;font-size:31.3px;color:#4a90e2;font-weight:400;font-family:'Liberation Mono', monospace;">origin_airport_raw</div>
</div>
<div class="b" style="left:1974.0px;top:997.0px;width:17.0px;height:226.0px;background:#a9a9a9;border-radius:8px;"></div>
<div class="b" style="left:801.0px;top:1371.0px;width:1192.0px;height:2.0px;background:#e3e3e3;"></div>
<div class="b" style="left:801.0px;top:1453.0px;width:1192.0px;height:2.0px;background:#e3e3e3;"></div>
<div class="b" style="left:801.0px;top:1543.0px;width:1192.0px;height:2.0px;background:#e3e3e3;"></div>
<div class="b" style="left:801.0px;top:1624.0px;width:1192.0px;height:2.0px;background:#e3e3e3;"></div>
<div class="b" style="left:801.0px;top:1705.0px;width:1192.0px;height:2.0px;background:#e3e3e3;"></div>
<div class="b" style="left:801.0px;top:1786.0px;width:1192.0px;height:2.0px;background:#e3e3e3;"></div>
<div class="t" id="t48" style="left:801.0px;top:1396.9px;font-size:31.0px;color:#222;font-weight:400;font-family:'Liberation Sans', sans-serif;transform:scaleX(0.9750);-webkit-text-stroke:0.81px #222;">createTime</div>
<div class="t" id="t49" style="left:1158.0px;top:1396.9px;font-size:31.0px;color:#222;font-weight:400;font-family:'Liberation Sans', sans-serif;transform:scaleX(0.9018);">11/14/2025 02:33:01 PM (CET)</div>
<div class="t" id="t50" style="left:801.0px;top:1477.6px;font-size:31.0px;color:#222;font-weight:400;font-family:'Liberation Sans', sans-serif;-webkit-text-stroke:0.81px #222;">db</div>
<div class="t" id="t51" style="left:801.0px;top:1566.9px;font-size:31.0px;color:#222;font-weight:400;font-family:'Liberation Sans', sans-serif;transform:scaleX(0.9420);-webkit-text-stroke:0.81px #222;">lastAccessTime</div>
<div class="t" id="t52" style="left:1158.0px;top:1566.9px;font-size:31.0px;color:#222;font-weight:400;font-family:'Liberation Sans', sans-serif;transform:scaleX(0.9160);">11/14/2025 02:33:01 PM</div>
<div class="t" id="t53" style="left:801.0px;top:1647.9px;font-size:31.0px;color:#222;font-weight:400;font-family:'Liberation Sans', sans-serif;transform:scaleX(0.9640);-webkit-text-stroke:0.81px #222;">name</div>
<div class="t" id="t54" style="left:1158.0px;top:1647.9px;font-size:31.0px;color:#222;font-weight:400;font-family:'Liberation Sans', sans-serif;transform:scaleX(0.9655);">raw_bookings</div>
<div class="t" id="t55" style="left:801.0px;top:1729.3px;font-size:31.0px;color:#222;font-weight:400;font-family:'Liberation Sans', sans-serif;transform:scaleX(1.0091);-webkit-text-stroke:0.81px #222;">owner</div>
<div class="t" id="t56" style="left:1158.0px;top:1729.3px;font-size:31.0px;color:#222;font-weight:400;font-family:'Liberation Sans', sans-serif;transform:scaleX(0.9830);">admin</div>
<div class="t" id="t57" style="left:801.0px;top:1809.9px;font-size:31.0px;color:#222;font-weight:400;font-family:'Liberation Sans', sans-serif;transform:scaleX(0.9816);-webkit-text-stroke:0.81px #222;">parameters</div>
<div class="t" id="t58" style="left:1158.0px;top:1481.4px;font-size:31.0px;color:#4a90e2;font-weight:400;font-family:'Liberation Sans', sans-serif;transform:scaleX(0.9660);">airline_operations@cm</div>
<div class="b" style="left:1158.0px;top:1807.0px;width:835.0px;height:200.0px;background:#f7f8fc;border:2px solid #bdbdbd;box-sizing:border-box;"></div>
<div class="t" id="t59" style="left:1181.5px;top:1836.9px;font-size:31.3px;color:#222;font-weight:400;font-family:'Liberation Mono', monospace;">{</div>
<div class="t" id="t60" style="left:1239.7px;top:1881.9px;font-size:31.3px;color:#222;font-weight:400;font-family:'Liberation Mono', monospace;"><span style="color:#a31515">totalSize</span>: <span style="color:#7c7c00">"0"</span>,</div>
<div class="b" style="left:1974.0px;top:1810.0px;width:17.0px;height:200.0px;background:#a9a9a9;border-radius:8px;"></div>
<div class="b" style="left:2100.0px;top:832.0px;width:1267.0px;height:118.0px;background:#f2f5f6;border:2px solid #dcdcdc;border-radius:8px;box-sizing:border-box;"></div>
<svg class="b" style="left:2141.5px;top:875.0px" width="26" height="30" viewBox="0 0 26 30"><polyline points="5,3 17,15 5,27" fill="none" stroke="#6b6b6b" stroke-width="3.2"/></svg>
<div class="t" id="t61" style="left:2187.0px;top:872.6px;font-size:33.0px;color:#38b292;font-weight:400;font-family:'Liberation Sans', sans-serif;transform:scaleX(0.9280);-webkit-text-stroke:0.86px #38b292;">User-defined properties</div>
<div class="b" style="left:3234.0px;top:860.0px;width:95.0px;height:62.0px;background:#f2f5f6;border:2px solid #dadada;border-radius:8px;box-sizing:border-box;"></div>
<div class="t" id="t62" style="left:3256.0px;top:872.9px;font-size:30.0px;color:#2a862a;font-weight:400;font-family:'Liberation Sans', sans-serif;transform:scaleX(0.9552);-webkit-text-stroke:0.78px #2a862a;">Add</div>
<div class="b" style="left:2100.0px;top:985.5px;width:1267.0px;height:118.0px;background:#f2f5f6;border:2px solid #dcdcdc;border-radius:8px;box-sizing:border-box;"></div>
<svg class="b" style="left:2141.5px;top:1028.5px" width="26" height="30" viewBox="0 0 26 30"><polyline points="5,3 17,15 5,27" fill="none" stroke="#6b6b6b" stroke-width="3.2"/></svg>
<div class="t" id="t63" style="left:2187.0px;top:1026.1px;font-size:33.0px;color:#38b292;font-weight:400;font-family:'Liberation Sans', sans-serif;transform:scaleX(0.8907);-webkit-text-stroke:0.86px #38b292;">Labels</div>
<div class="b" style="left:3234.0px;top:1013.5px;width:95.0px;height:62.0px;background:#f2f5f6;border:2px solid #dadada;border-radius:8px;box-sizing:border-box;"></div>
<div class="t" id="t64" style="left:3256.0px;top:1026.3px;font-size:30.0px;color:#2a862a;font-weight:400;font-family:'Liberation Sans', sans-serif;transform:scaleX(0.9552);-webkit-text-stroke:0.78px #2a862a;">Add</div>
<div class="b" style="left:2100.0px;top:1139.0px;width:1267.0px;height:118.0px;background:#f2f5f6;border:2px solid #dcdcdc;border-radius:0px;box-sizing:border-box;"></div>
<svg class="b" style="left:2141.5px;top:1182.0px" width="26" height="30" viewBox="0 0 26 30"><polyline points="5,3 17,15 5,27" fill="none" stroke="#6b6b6b" stroke-width="3.2"/></svg>
<div class="t" id="t65" style="left:2187.0px;top:1179.6px;font-size:33.0px;color:#38b292;font-weight:400;font-family:'Liberation Sans', sans-serif;transform:scaleX(0.8903);-webkit-text-stroke:0.86px #38b292;">Business Metadata</div>
<div class="b" style="left:3234.0px;top:1167.0px;width:95.0px;height:62.0px;background:#f2f5f6;border:2px solid #dadada;border-radius:8px;box-sizing:border-box;"></div>
<div class="t" id="t66" style="left:3256.0px;top:1179.8px;font-size:30.0px;color:#2a862a;font-weight:400;font-family:'Liberation Sans', sans-serif;transform:scaleX(0.9552);-webkit-text-stroke:0.78px #2a862a;">Add</div>
<div class="b" style="left:3439.0px;top:0.0px;width:17.0px;height:1313.0px;background:#a9a9a9;border-radius:8px;"></div>
<svg class="b" style="left:0.0px;top:1886.0px" width="30" height="30" viewBox="0 0 30 30"><path d="M0,30 H25.5 V28.5 H24.5 A22.5,22.5 0 0 1 1.5,5.5 H0 Z" fill="#000"/><path d="M24.5,28.5 A22.5,22.5 0 0 1 1.5,5.5" fill="none" stroke="#5d8590" stroke-width="1.6"/></svg>
<svg class="b" style="left:3426.0px;top:1886.0px" width="30" height="30" viewBox="0 0 30 30"><path d="M30,30 H4.5 V28.5 H5.5 A22.5,22.5 0 0 0 28.5,5.5 H30 Z" fill="#000"/></svg>
</body></html>
